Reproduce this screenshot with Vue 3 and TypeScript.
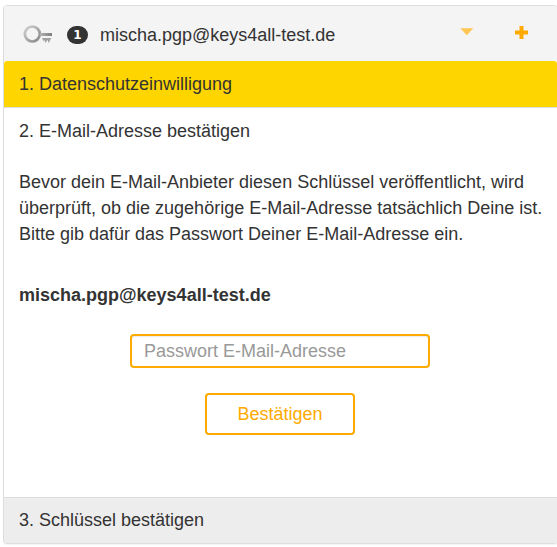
<script setup lang="ts">
import { ref } from 'vue'

const email = 'mischa.pgp@keys4all-test.de'
const keyCount = 1
const password = ref<string>('')
</script>

<template>
  <main class="page">
    <section class="panel">
      <header class="head">
        <svg class="key" width="30" height="20" viewBox="0 0 30 20">
          <defs>
            <linearGradient id="ring" x1="0" y1="0" x2="1" y2="1">
              <stop offset="0" stop-color="#d2d2d2" />
              <stop offset="1" stop-color="#858585" />
            </linearGradient>
            <linearGradient id="shaft" x1="0" y1="0" x2="1" y2="0">
              <stop offset="0" stop-color="#b4b4b4" />
              <stop offset="1" stop-color="#7c7c7c" />
            </linearGradient>
          </defs>
          <circle cx="9.3" cy="10" r="7.5" fill="none" stroke="url(#ring)" stroke-width="2.7" />
          <path d="M17 9h12v3H17z" fill="url(#shaft)" />
          <path d="M19 14h9.2l-2.4 5-1.5-3.2-1.7 3.2-1.5-3.2-.6 1.4z" fill="#a0a0a0" />
        </svg>
        <span class="badge">{{ keyCount }}</span>
        <span class="address">{{ email }}</span>
        <svg class="caret" width="14" height="8" viewBox="0 0 14 8">
          <path d="M0.3 0.3h13L6.8 7.2z" fill="#ffc653" />
        </svg>
        <svg class="plus" width="13" height="13" viewBox="0 0 13 13">
          <path d="M4.5 0h4v4.5H13v4H8.5V13h-4V8.5H0v-4h4.5z" fill="#ffaa00" />
        </svg>
      </header>
      <div class="step done">1. Datenschutzeinwilligung</div>
      <form class="current" @submit.prevent>
        <div class="step">2. E-Mail-Adresse bestätigen</div>
        <p class="info">
          Bevor dein E-Mail-Anbieter diesen Schlüssel veröffentlicht, wird<br />
          überprüft, ob die zugehörige E-Mail-Adresse tatsächlich Deine ist.<br />
          Bitte gib dafür das Passwort Deiner E-Mail-Adresse ein.
        </p>
        <strong class="mail">{{ email }}</strong>
        <input v-model="password" class="field" type="password" placeholder="Passwort E-Mail-Adresse" />
        <button class="confirm" type="submit">Bestätigen</button>
      </form>
      <div class="step next">3. Schlüssel bestätigen</div>
    </section>
  </main>
</template>

<style>
body {
  background: #fff;
}
</style>

<style scoped>
.page {
  box-sizing: border-box;
  height: 547px;
  padding: 5px 0 0 3px;
  overflow: hidden;
  color: #333;
  font: 18px/26px "Liberation Sans", Arial, sans-serif;
}
.panel {
  box-sizing: border-box;
  width: 555px;
  height: 539px;
  display: flex;
  flex-direction: column;
  border: 1px solid #ddd;
  border-radius: 4px;
  background: #fff;
  box-shadow: 0 1px 1px rgba(0, 0, 0, 0.05);
}
.head {
  box-sizing: border-box;
  height: 55px;
  flex: none;
  display: flex;
  align-items: center;
  padding: 1px 29px 0 19px;
  border-radius: 3px 3px 0 0;
  background: #f4f4f4;
}
.badge {
  width: 21px;
  height: 18px;
  margin: 2px 12px 0 14px;
  border-radius: 10px;
  background: #333;
  color: #fff;
  font-family: "DejaVu Sans", sans-serif;
  font-size: 12px;
  font-weight: bold;
  line-height: 18px;
  text-align: center;
}
.address {
  padding-top: 1px;
}
.caret {
  margin: 0 41px 5px auto;
}
.plus {
  margin: 0 0 3px;
}
.step {
  box-sizing: border-box;
  height: 46px;
  flex: none;
  padding: 10px 15px;
}
.done {
  border-radius: 3px 3px 0 0;
  background: #ffd500;
}
.current {
  flex: 1;
  display: flex;
  flex-direction: column;
  border-top: 1px solid #ddd;
}
.info {
  margin: 15px 15px 0;
  white-space: nowrap;
}
.mail {
  margin: 35px 15px 0;
}
.field {
  box-sizing: border-box;
  width: 300px;
  height: 34px;
  margin: 26px 0 0 126px;
  padding: 0 12px;
  border: 2px solid #ffaa00;
  border-radius: 4px;
  outline: 0;
  background: #fff;
  box-shadow: inset 0 1px 1px rgba(0, 0, 0, 0.075);
  color: #333;
  font: inherit;
}
.field::placeholder {
  color: #999;
  opacity: 1;
}
.confirm {
  width: 150px;
  height: 42px;
  margin: 25px 0 0 201px;
  padding: 0;
  border: 2px solid #ffaa00;
  border-radius: 4px;
  background: #fff;
  color: #ffaa00;
  font: inherit;
}
.next {
  padding-top: 9px;
  border-top: 1px solid #ddd;
  border-radius: 0 0 3px 3px;
  background: #ededed;
}
</style>
